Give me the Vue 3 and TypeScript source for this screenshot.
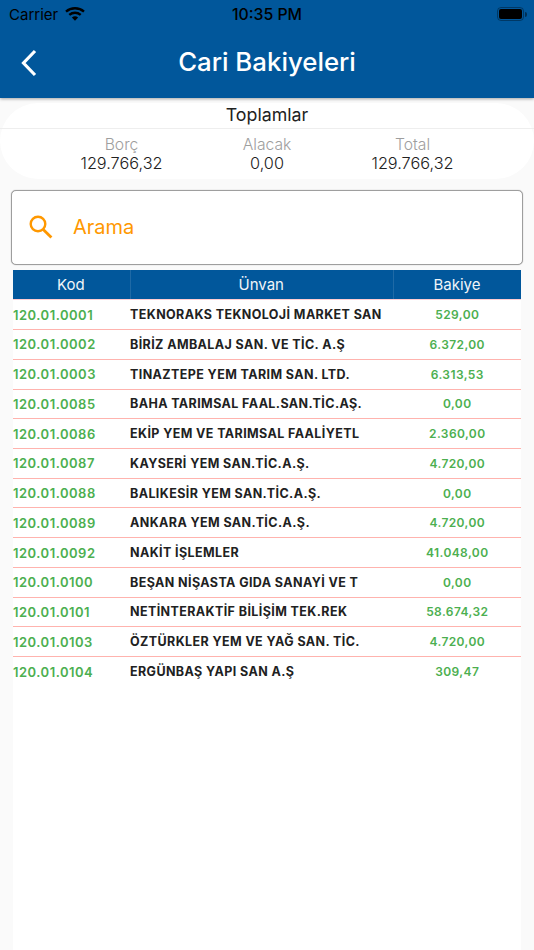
<script setup lang="ts">
interface Row {
  kod: string
  unvan: string
  bakiye: string
}

const totals = [
  { label: 'Borç', value: '129.766,32' },
  { label: 'Alacak', value: '0,00' },
  { label: 'Total', value: '129.766,32' },
]

const rows: Row[] = [
  { kod: '120.01.0001', unvan: 'TEKNORAKS TEKNOLOJİ MARKET SAN', bakiye: '529,00' },
  { kod: '120.01.0002', unvan: 'BİRİZ AMBALAJ SAN. VE TİC. A.Ş', bakiye: '6.372,00' },
  { kod: '120.01.0003', unvan: 'TINAZTEPE YEM TARIM SAN. LTD.', bakiye: '6.313,53' },
  { kod: '120.01.0085', unvan: 'BAHA TARIMSAL FAAL.SAN.TİC.AŞ.', bakiye: '0,00' },
  { kod: '120.01.0086', unvan: 'EKİP YEM VE TARIMSAL FAALİYETL', bakiye: '2.360,00' },
  { kod: '120.01.0087', unvan: 'KAYSERİ YEM SAN.TİC.A.Ş.', bakiye: '4.720,00' },
  { kod: '120.01.0088', unvan: 'BALIKESİR YEM SAN.TİC.A.Ş.', bakiye: '0,00' },
  { kod: '120.01.0089', unvan: 'ANKARA YEM SAN.TİC.A.Ş.', bakiye: '4.720,00' },
  { kod: '120.01.0092', unvan: 'NAKİT İŞLEMLER', bakiye: '41.048,00' },
  { kod: '120.01.0100', unvan: 'BEŞAN NİŞASTA GIDA SANAYİ VE T', bakiye: '0,00' },
  { kod: '120.01.0101', unvan: 'NETİNTERAKTİF BİLİŞİM TEK.REK', bakiye: '58.674,32' },
  { kod: '120.01.0103', unvan: 'ÖZTÜRKLER YEM VE YAĞ SAN. TİC.', bakiye: '4.720,00' },
  { kod: '120.01.0104', unvan: 'ERGÜNBAŞ YAPI SAN A.Ş', bakiye: '309,47' },
]
</script>

<template>
  <div class="page">
    <header class="appbar">
      <div class="status">
        <div class="carrier">
          <span>Carrier</span>
          <svg width="20" height="14" viewBox="0 0 20 14">
            <path d="M1 4.6C6 .2 14 .2 19 4.6" fill="none" stroke="#000" stroke-width="2.4" />
            <path d="M4.3 7.8c3.3-2.8 8.1-2.8 11.4 0" fill="none" stroke="#000" stroke-width="2.4" />
            <path d="M6.9 10.4c1.8-1.4 4.4-1.4 6.2 0L10 13.8z" fill="#000" />
          </svg>
        </div>
        <span class="clock">10:35 PM</span>
        <div class="battery"><i></i></div>
      </div>
      <div class="nav">
        <svg class="back" width="18" height="28" viewBox="0 0 18 28">
          <path d="M15 2 3.5 14 15 26" fill="none" stroke="#fff" stroke-width="3.2" />
        </svg>
        <h1>Cari Bakiyeleri</h1>
      </div>
    </header>

    <section class="totals">
      <div class="totals-title">Toplamlar</div>
      <div class="totals-row">
        <div v-for="t in totals" :key="t.label" class="total">
          <span class="total-label">{{ t.label }}</span>
          <span class="total-value">{{ t.value }}</span>
        </div>
      </div>
    </section>

    <div class="search">
      <svg width="26" height="26" viewBox="0 0 26 26">
        <circle cx="10" cy="9" r="7.3" fill="none" stroke="#ff9800" stroke-width="2.4" />
        <path d="M15.2 14.4 23.4 22.6" fill="none" stroke="#ff9800" stroke-width="2.8" />
      </svg>
      <span class="search-text">Arama</span>
    </div>

    <div class="table">
      <div class="thead">
        <div>Kod</div>
        <div>Ünvan</div>
        <div>Bakiye</div>
      </div>
      <div v-for="row in rows" :key="row.kod" class="tr">
        <div class="kod">{{ row.kod }}</div>
        <div class="unvan">{{ row.unvan }}</div>
        <div class="bakiye">{{ row.bakiye }}</div>
      </div>
    </div>
  </div>
</template>

<style scoped>
.page {
  width: 534px;
  height: 950px;
  overflow: hidden;
  background: #fafafa;
  font-family: Inter, "Noto Sans", sans-serif;
  display: flex;
  flex-direction: column;
}

.appbar {
  height: 98px;
  flex: none;
  background: #01579b;
  box-shadow: 0 1px 3px rgba(0, 0, 0, 0.35);
  position: relative;
}

.status {
  height: 28px;
  padding: 0 10px 0 9px;
  display: flex;
  align-items: center;
  justify-content: space-between;
  position: relative;
  color: #000;
  font-size: 15px;
}

.carrier {
  display: flex;
  align-items: center;
  gap: 7px;
}

.clock {
  position: absolute;
  left: 0;
  right: 0;
  text-align: center;
  font-size: 15.8px;
  font-weight: 500;
}

.battery {
  width: 27px;
  height: 14px;
  border: 1px solid rgba(0, 0, 0, 0.35);
  border-radius: 4px;
  padding: 1px;
  box-sizing: border-box;
  position: relative;
}

.battery::after {
  content: "";
  position: absolute;
  right: -4px;
  top: 3.5px;
  width: 2px;
  height: 5px;
  background: rgba(0, 0, 0, 0.45);
  border-radius: 0 2px 2px 0;
}

.battery i {
  display: block;
  height: 100%;
  background: #000;
  border-radius: 2px;
}

.nav {
  height: 70px;
  display: flex;
  align-items: center;
  justify-content: center;
  position: relative;
}

.back {
  position: absolute;
  left: 20px;
  top: 21px;
}

h1 {
  margin: 0;
  color: #fff;
  font-size: 25.8px;
  font-weight: 500;
  position: relative;
  top: -2px;
}

.totals {
  margin-top: 5px;
  height: 76px;
  flex: none;
  background: #fff;
  border-radius: 38px;
  color: #212121;
}

.totals-title {
  height: 25px;
  line-height: 24px;
  box-sizing: content-box;
  border-bottom: 1px solid #eee;
  text-align: center;
  font-size: 17.8px;
}

.totals-row {
  display: grid;
  grid-template-columns: repeat(3, 145.5px);
  justify-content: center;
  padding-top: 7px;
}

.total {
  display: flex;
  flex-direction: column;
  align-items: center;
  font-size: 16.3px;
  line-height: 18px;
  font-weight: 300;
}

.total-label {
  color: #9e9e9e;
  font-size: 15.7px;
}

.search {
  margin: 11px 11px 0;
  height: 75px;
  flex: none;
  box-sizing: border-box;
  background: #fff;
  border: 1.5px solid #9e9e9e;
  border-radius: 5px;
  box-shadow: 0 0 1px rgba(0, 0, 0, 0.4);
  display: flex;
  align-items: center;
  gap: 19px;
  padding-left: 16px;
  color: #ff9800;
  font-size: 20px;
}

.search-text {
  margin-bottom: 2px;
}

.table {
  margin: 5px 13px 0;
  flex: 1;
  background: #fff;
}

.thead,
.tr {
  display: grid;
  grid-template-columns: 117px 263.5px 127.5px;
  align-items: center;
}

.thead {
  grid-template-columns: 116.5px 263.5px 128px;
  height: 30.4px;
  box-sizing: border-box;
  background: #01579b;
  border-bottom: 1px solid #ffcdd2;
  color: #f0f4f8;
  font-size: 15px;
  text-align: center;
  align-items: stretch;
}

.thead div {
  line-height: 29px;
  padding-right: 1px;
  border-left: 1px solid #1f6aa6;
}

.thead div:first-child {
  border-left: 0;
}

.tr {
  height: 29.73px;
  box-sizing: border-box;
  border-bottom: 1px solid #ffb3ae;
  font-size: 13px;
  font-weight: 600;
  letter-spacing: 0.5px;
  white-space: nowrap;
}

.tr:last-child {
  border-bottom: 0;
}

.kod {
  color: #4caf50;
}

.unvan {
  color: #212121;
  font-size: 12.5px;
  font-weight: 700;
  letter-spacing: 0.4px;
}

.bakiye {
  color: #4caf50;
  text-align: center;
  font-size: 12px;
  letter-spacing: 0.4px;
}
</style>
